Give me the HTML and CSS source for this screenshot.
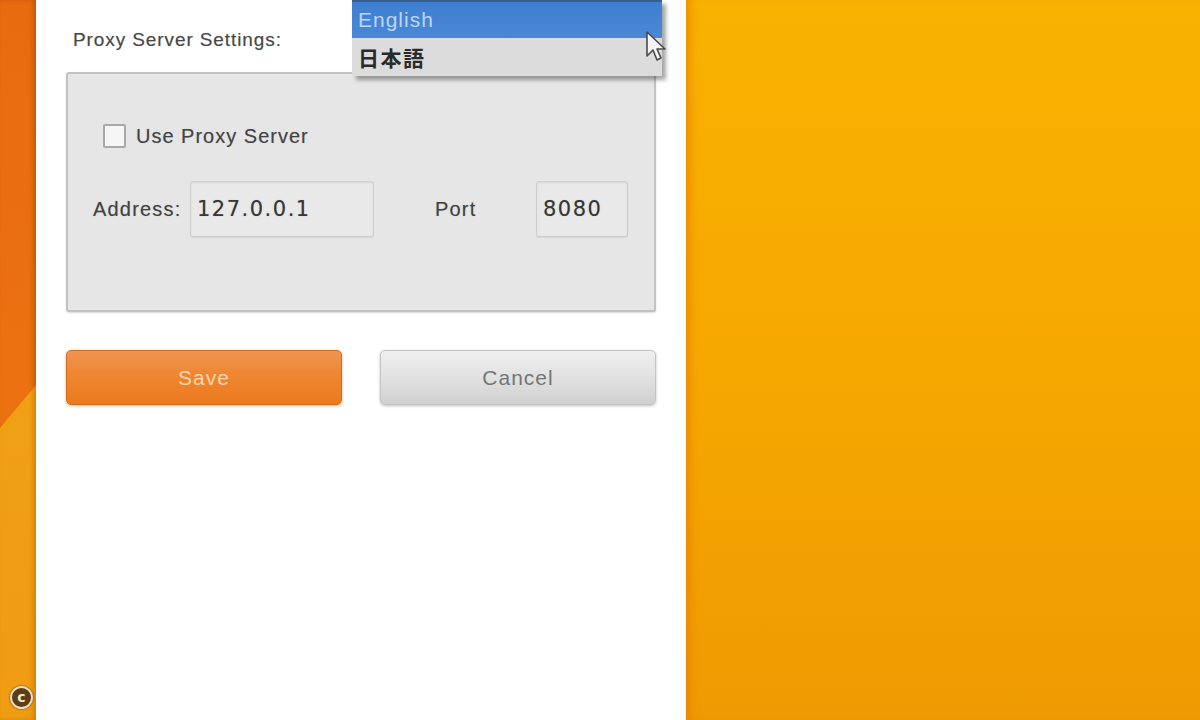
FILE: index.html
```html
<!DOCTYPE html>
<html lang="en">
<head>
<meta charset="utf-8">
<title>Proxy Server Settings</title>
<link rel="stylesheet" href="styles.css">
</head>
<body>
<div class="screen">
  <aside class="strip">
    <div class="strip-top"></div>
    <div class="copyright">c</div>
  </aside>
  <main class="panel">
    <div class="title">Proxy Server Settings:</div>
    <section class="group">
      <label class="check-row">
        <span class="checkbox"></span>
        <span class="check-label">Use Proxy Server</span>
      </label>
      <div class="addr-row">
        <span class="lbl lbl-address">Address:</span>
        <span class="field field-address">127.0.0.1</span>
        <span class="lbl lbl-port">Port</span>
        <span class="field field-port">8080</span>
      </div>
    </section>
    <div class="buttons">
      <button class="btn btn-save">Save</button>
      <button class="btn btn-cancel">Cancel</button>
    </div>
  </main>
  <div class="desktop"></div>

  <ul class="dropdown">
    <li class="opt opt-active">English</li>
    <li class="opt opt-ja">日本語</li>
  </ul>
  <svg class="cursor" width="24" height="34" viewBox="0 0 24 34">
    <path d="M2 2 L2 26 L8 20 L12 30 L16 28 L12 19 L20 19 Z" fill="#f4f4f4" stroke="#4a4a4a" stroke-width="1.6" stroke-linejoin="round"/>
  </svg>
</div>
</body>
</html>
```
FILE: styles.css
```css
* { box-sizing: border-box; }
html, body { margin: 0; padding: 0; }
body {
  width: 1200px;
  height: 720px;
  overflow: hidden;
  font-family: "Liberation Sans", Arial, "Noto Sans CJK JP", sans-serif;
}
.screen {
  position: relative;
  display: flex;
  width: 1200px;
  height: 720px;
}

/* left orange strip */
.strip {
  position: relative;
  width: 36px;
  flex: none;
  background: linear-gradient(180deg, #f19a12 0%, #f0a014 60%, #ef9c12 100%);
  box-shadow: inset -3px 0 4px rgba(170, 80, 0, 0.35);
}
.strip-top {
  height: 430px;
  background: linear-gradient(180deg, #e96b10 0%, #ec7210 100%);
  clip-path: polygon(0 0, 100% 0, 100% 385px, 0 428px);
  box-shadow: inset -3px 0 4px rgba(140, 50, 0, 0.35);
}
.copyright {
  position: absolute;
  left: 10px;
  top: 686px;
  width: 23px;
  height: 23px;
  border-radius: 50%;
  background: #5b3d18;
  border: 2px solid #eedcb8;
  color: #f4e6c8;
  font: bold 14px/18px "DejaVu Sans", sans-serif;
  text-align: center;
  box-shadow: 0 0 2px rgba(60, 30, 0, 0.8);
}

/* white settings panel */
.panel {
  width: 650px;
  flex: none;
  background: #ffffff;
  padding: 29px 30px 0 30px;
}
.title {
  margin-left: 7px;
  height: 22px;
  font-size: 19px;
  line-height: 22px;
  letter-spacing: 0.9px;
  color: #484848;
  text-shadow: 0 0 1px rgba(0, 0, 0, 0.25);
}
.group {
  margin-top: 21px;
  height: 240px;
  background: #e6e6e6;
  border: 2px solid #c2c2c2;
  border-radius: 3px;
  box-shadow: 0 1px 2px rgba(0, 0, 0, 0.15);
  padding: 49px 26px 0 25px;
}
.check-row {
  display: flex;
  align-items: center;
  height: 26px;
  padding-left: 10px;
}
.checkbox {
  width: 23px;
  height: 24px;
  background: #f6f6f6;
  border: 2px solid #a9a9a9;
  border-radius: 2px;
}
.check-label {
  margin-left: 10px;
  font-size: 20px;
  letter-spacing: 1px;
  color: #444;
  text-shadow: 0 0 1px rgba(0, 0, 0, 0.25);
}
.addr-row {
  display: flex;
  align-items: center;
  margin-top: 32px;
  height: 56px;
}
.lbl {
  font-size: 20px;
  letter-spacing: 1.2px;
  color: #424242;
  text-shadow: 0 0 1px rgba(0, 0, 0, 0.25);
}
.lbl-address { width: 97px; }
.lbl-port { margin-left: 61px; width: 101px; }
.field {
  height: 56px;
  display: flex;
  align-items: center;
  padding-left: 6px;
  background: #e9e9e9;
  border: 1px solid #cfcfcf;
  border-radius: 3px;
  box-shadow: inset 0 1px 2px rgba(0, 0, 0, 0.08), 0 1px 1px rgba(0, 0, 0, 0.08);
  font-family: "DejaVu Sans", sans-serif;
  font-size: 21px;
  letter-spacing: 1.5px;
  color: #363636;
  text-shadow: 0 0 1px rgba(0, 0, 0, 0.25);
}
.field-address { width: 184px; }
.field-port { width: 92px; }

.buttons {
  display: flex;
  gap: 38px;
  margin-top: 38px;
}
.btn {
  width: 276px;
  height: 55px;
  border-radius: 5px;
  font-family: "Liberation Sans", Arial, sans-serif;
  font-size: 21px;
  letter-spacing: 1px;
  cursor: pointer;
}
.btn-save {
  background: linear-gradient(180deg, #f09453 0%, #ee852f 50%, #ec7a1e 100%);
  border: 1px solid #d66a17;
  color: #fdd6ae;
  box-shadow: 0 1px 3px rgba(120, 60, 0, 0.35);
}
.btn-cancel {
  background: linear-gradient(180deg, #efefef 0%, #e0e0e0 55%, #d0d0d0 100%);
  border: 1px solid #c4c4c4;
  color: #757575;
  box-shadow: 0 1px 3px rgba(0, 0, 0, 0.25);
}

/* right desktop area */
.desktop {
  flex: 1;
  background: linear-gradient(180deg, #f9b200 0%, #f6a800 50%, #ef9a02 100%);
  box-shadow: inset 10px 0 8px -6px rgba(230, 120, 0, 0.6);
}

/* open dropdown list (overlay) */
.dropdown {
  position: absolute;
  left: 352px;
  top: 0;
  width: 310px;
  margin: 0;
  padding: 0;
  list-style: none;
  box-shadow: 4px 4px 4px rgba(0, 0, 0, 0.35);
}
.opt {
  height: 38px;
  padding-left: 6px;
  display: flex;
  align-items: center;
  font-size: 21px;
  letter-spacing: 1px;
  background: #dcdcdc;
  color: #2a2a2a;
}
.opt-ja {
  font-weight: bold;
  letter-spacing: 1.5px;
}
.opt-active {
  background: linear-gradient(180deg, #3f7fd1 0%, #4a88d6 100%);
  border-top: 2px solid #3a5f8f;
  color: #bcd6f6;
}
.cursor {
  position: absolute;
  left: 645px;
  top: 30px;
}
```
